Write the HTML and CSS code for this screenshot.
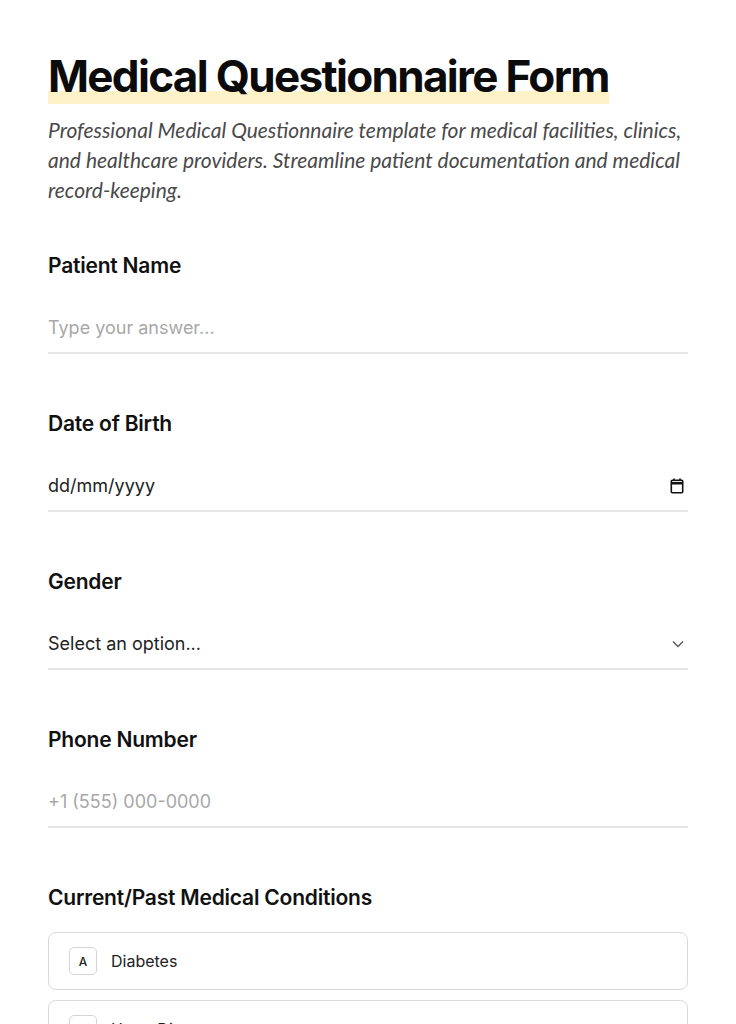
FILE: index.html
```html
<!DOCTYPE html>
<html lang="en">
  <head>
    <meta charset="utf-8">
    <title>Medical Questionnaire Form</title>
    <link rel="stylesheet" href="styles.css">
  </head>
  <body>
    <main class="form">
      <header class="form-header">
        <h1 class="form-title"><span>Medical Questionnaire Form</span></h1>
        <p class="form-desc">Professional Medical Questionnaire template for medical facilities, clinics, and healthcare providers. Streamline patient documentation and medical record-keeping.</p>
      </header>

      <div class="field">
        <label class="field-label" for="patient-name">Patient Name</label>
        <input class="field-input" id="patient-name" type="text" placeholder="Type your answer...">
      </div>

      <div class="field">
        <label class="field-label" for="dob">Date of Birth</label>
        <div class="field-input date-input">
          <span>dd/mm/yyyy</span>
          <svg width="18" height="18" viewBox="0 0 18 18" fill="none" stroke="#111" stroke-width="1.6">
            <rect x="3.3" y="3.3" width="11.4" height="12.4" rx="1"/>
            <path d="M3.3 6.2h11.4" stroke-width="2.6"/>
            <path d="M6 1.5v2.5M12 1.5v2.5"/>
          </svg>
        </div>
      </div>

      <div class="field">
        <label class="field-label" for="gender">Gender</label>
        <div class="field-input select-input" id="gender">
          <span>Select an option...</span>
          <svg width="14" height="14" viewBox="0 0 14 14" fill="none" stroke="#555" stroke-width="1.4">
            <path d="M2 4.5l5 5 5-5"/>
          </svg>
        </div>
      </div>

      <div class="field">
        <label class="field-label" for="phone">Phone Number</label>
        <input class="field-input" id="phone" type="text" placeholder="+1 (555) 000-0000">
      </div>

      <div class="field">
        <div class="field-label">Current/Past Medical Conditions</div>
        <div class="options">
          <div class="option"><span class="option-key">A</span>Diabetes</div>
          <div class="option"><span class="option-key">B</span>Heart Disease</div>
        </div>
      </div>
    </main>
  </body>
</html>
```

FILE: styles.css
```css
body {
  margin: 0;
  background: #fff;
  color: #111;
  font-family: Inter, "Noto Sans", sans-serif;
}

.form {
  padding: 48px 48px 60px;
}

.form-title {
  margin: 0;
  font-size: 44px;
  line-height: 57px;
  font-weight: 700;
  letter-spacing: -0.038em;
  color: #0b0b0b;
}

.form-title span {
  background: linear-gradient(transparent 76%, #fdf1c8 76%);
  padding-bottom: 1px;
}

.form-desc {
  margin: 10px 0 0;
  font-family: Lato, Inter, sans-serif;
  font-size: 21px;
  line-height: 30px;
  font-style: italic;
  color: #4a4a4a;
}

.field {
  margin-top: 47px;
}

.field + .field {
  margin-top: 56px;
}

.field-label {
  display: block;
  font-size: 21px;
  line-height: 28px;
  font-weight: 600;
  letter-spacing: -0.01em;
  margin-bottom: 24px;
}

.field-input {
  display: block;
  box-sizing: border-box;
  width: 100%;
  padding: 12px 0;
  font: inherit;
  font-size: 18px;
  line-height: 24px;
  color: #222;
  border: none;
  border-bottom: 2px solid #e6e6e6;
  outline: none;
  background: transparent;
}

.field-input::placeholder {
  color: #a8a8a8;
}

.date-input,
.select-input {
  display: flex;
  justify-content: space-between;
  align-items: center;
}

.date-input svg {
  margin-right: 2px;
}

.select-input svg {
  margin-right: 3px;
}

.options {
  display: flex;
  flex-direction: column;
  gap: 10px;
  margin-top: -4px;
}

.option {
  display: flex;
  align-items: center;
  gap: 14px;
  height: 58px;
  box-sizing: border-box;
  padding: 0 20px;
  border: 1px solid #d9d9d9;
  border-radius: 8px;
  font-size: 16px;
  color: #222;
}

.option-key {
  display: flex;
  align-items: center;
  justify-content: center;
  width: 28px;
  height: 28px;
  box-sizing: border-box;
  border: 1px solid #d4d4d4;
  border-radius: 5px;
  font-size: 12px;
  font-weight: 500;
}
```
